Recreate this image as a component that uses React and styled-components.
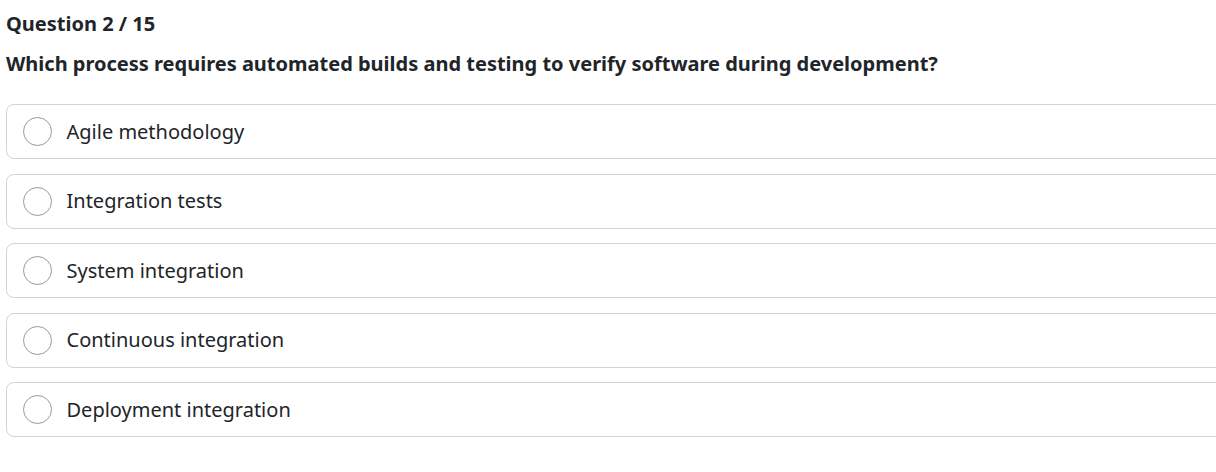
import React from 'react';
import styled, { createGlobalStyle } from 'styled-components';

const GlobalStyle = createGlobalStyle`
  html, body {
    margin: 0;
    padding: 0;
    background: #ffffff;
    overflow: hidden;
  }
  body {
    font-family: "Noto Sans", "Open Sans", sans-serif;
    color: #212529;
  }
`;

const options = [
  'Agile methodology',
  'Integration tests',
  'System integration',
  'Continuous integration',
  'Deployment integration',
];

const Quiz = () => {
  return (
    <Wrapper>
      <Counter>Question 2 / 15</Counter>
      <Prompt>
        Which process requires automated builds and testing to verify software during development?
      </Prompt>
      <OptionList>
        {options.map((label) => (
          <Option key={label}>
            <Radio />
            <OptionLabel>{label}</OptionLabel>
          </Option>
        ))}
      </OptionList>
    </Wrapper>
  );
};

const Wrapper = styled.div`
  width: 1240px;
  padding: 10px 0 0 6px;
`;

const Counter = styled.h2`
  margin: 0;
  font-size: 20px;
  line-height: 28px;
  font-weight: 700;
`;

const Prompt = styled.p`
  margin: 12px 0 0;
  font-size: 20px;
  line-height: 28px;
  font-weight: 700;
`;

const OptionList = styled.div`
  display: flex;
  flex-direction: column;
  gap: 14.5px;
  margin-top: 26px;
`;

const Option = styled.label`
  display: flex;
  align-items: center;
  gap: 15px;
  height: 55px;
  box-sizing: border-box;
  padding: 0 15.5px;
  border: 1px solid #d4d4d4;
  border-radius: 8px;
  background: #ffffff;
  cursor: pointer;
`;

const Radio = styled.span`
  flex: none;
  width: 29px;
  height: 29px;
  box-sizing: border-box;
  border: 1px solid #9a9a9a;
  border-radius: 50%;
`;

const OptionLabel = styled.span`
  font-size: 20px;
  line-height: 28px;
  color: #212529;
`;

export default function App() {
  return (
    <>
      <GlobalStyle />
      <Quiz />
    </>
  );
}
